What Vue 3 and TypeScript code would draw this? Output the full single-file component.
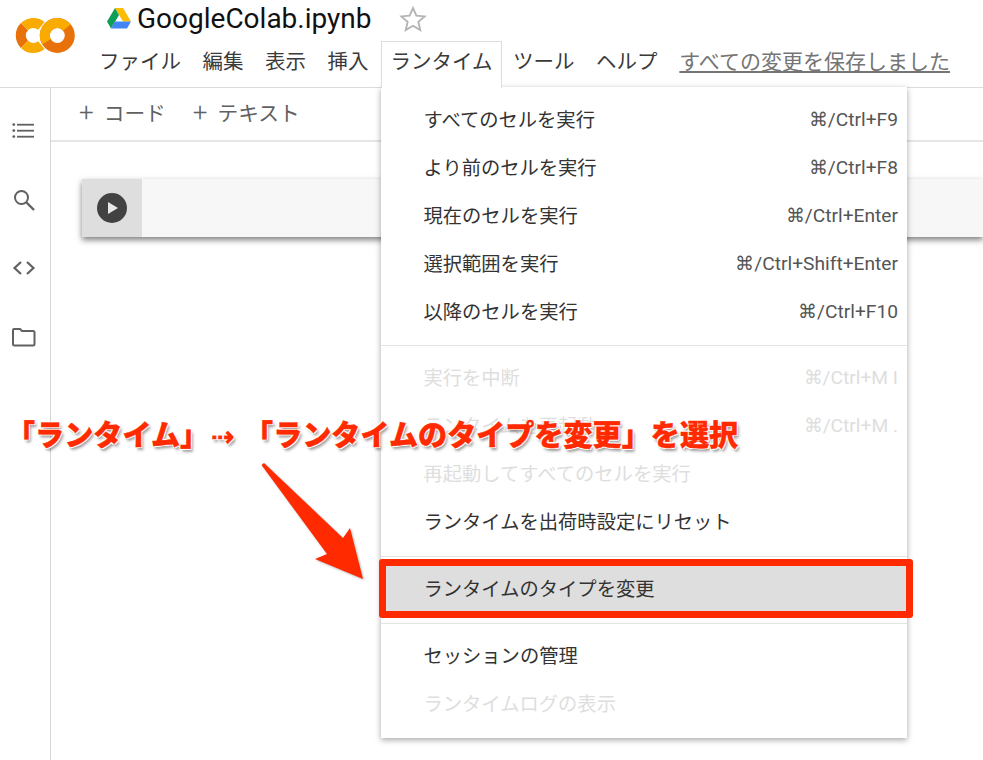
<script setup lang="ts">
interface MenuItem { label: string; shortcut?: string; disabled?: boolean }
const navItems: string[] = ['ファイル', '編集', '表示', '挿入']
const groupA: MenuItem[] = [
  { label: 'すべてのセルを実行', shortcut: '⌘/Ctrl+F9' },
  { label: 'より前のセルを実行', shortcut: '⌘/Ctrl+F8' },
  { label: '現在のセルを実行', shortcut: '⌘/Ctrl+Enter' },
  { label: '選択範囲を実行', shortcut: '⌘/Ctrl+Shift+Enter' },
  { label: '以降のセルを実行', shortcut: '⌘/Ctrl+F10' },
]
const groupB: MenuItem[] = [
  { label: '実行を中断', shortcut: '⌘/Ctrl+M I', disabled: true },
  { label: 'ランタイムを再起動', shortcut: '⌘/Ctrl+M .', disabled: true },
  { label: '再起動してすべてのセルを実行', disabled: true },
  { label: 'ランタイムを出荷時設定にリセット' },
]
const groupC: MenuItem[] = [
  { label: 'セッションの管理' },
  { label: 'ランタイムログの表示', disabled: true },
]
</script>

<template>
  <div class="page">
    <header class="header">
      <svg class="logo" width="60" height="36" viewBox="0 0 60 36" fill="none" stroke-width="10">
        <path d="M9.460 8.660 A12.500 12.500 0 0 0 9.460 26.340" stroke="#E8710A" />
        <path d="M9.460 8.660 A12.500 12.500 0 0 1 26.330 7.920" stroke="#F9AB00" />
        <path d="M9.460 26.340 A12.500 12.500 0 0 0 26.330 27.080" stroke="#F9AB00" />
        <circle cx="42.300" cy="17.500" r="12.500" stroke="#E8710A" />
        <path d="M51.880 9.470 A12.500 12.500 0 0 0 31.470 23.750" stroke="#F9AB00" />
      </svg>
      <div class="head-main">
        <div class="title-row">
          <svg class="drive" width="24" height="21" viewBox="0 0 24 21">
            <path d="M8 0h8l8 13.500h-8z" fill="#FBBC04" />
            <path d="M8 0L0 13.500l4 7L12 7z" fill="#0F9D58" />
            <path d="M4 20.500h16l4-7H8z" fill="#4285F4" />
          </svg>
          <span class="title">GoogleColab.ipynb</span>
          <svg class="star" width="30" height="30" viewBox="0 0 24 24">
            <path d="M12 3.200l2.700 6.100 6.600.6-5 4.400 1.500 6.500L12 17.400l-5.800 3.400 1.500-6.500-5-4.400 6.600-.6z" fill="none" stroke="#b4b4b4" stroke-width="1.500" />
          </svg>
        </div>
        <nav class="nav">
          <span v-for="n in navItems" :key="n" class="nav-item">{{ n }}</span>
          <span class="nav-item active">ランタイム</span>
          <span class="nav-item">ツール</span>
          <span class="nav-item">ヘルプ</span>
          <span class="saved">すべての変更を保存しました</span>
        </nav>
      </div>
    </header>

    <div class="body">
      <aside class="side">
        <svg width="24" height="24" viewBox="0 0 24 24" fill="#616161">
          <circle cx="1.800" cy="5.600" r="1.400" /><circle cx="1.800" cy="11.600" r="1.400" /><circle cx="1.800" cy="17.600" r="1.400" />
          <rect x="5" y="4.800" width="17" height="1.800" /><rect x="5" y="10.800" width="17" height="1.800" /><rect x="5" y="16.800" width="17" height="1.800" />
        </svg>
        <svg width="24" height="24" viewBox="0 0 24 24" fill="none" stroke="#616161" stroke-width="2">
          <circle cx="9.500" cy="9.500" r="6.500" /><path d="M14.500 14.500l7.500 7.500" stroke-width="2.400" />
        </svg>
        <svg width="24" height="24" viewBox="0 0 24 24" fill="none" stroke="#616161" stroke-width="2.200">
          <path d="M9 6l-6.500 6L9 18M15 6l6.500 6L15 18" />
        </svg>
        <svg width="24" height="24" viewBox="0 0 24 24" fill="none" stroke="#616161" stroke-width="2">
          <path d="M1 5a1 1 0 0 1 1-1h6l2 2h11a1.500 1.500 0 0 1 1.500 1.500V19a1.500 1.500 0 0 1-1.500 1.500H2.500A1.500 1.500 0 0 1 1 19z" />
        </svg>
      </aside>
      <main class="main">
        <div class="toolbar">
          <span class="tool"><span class="plus">+</span>コード</span>
          <span class="tool"><span class="plus">+</span>テキスト</span>
        </div>
        <div class="cell">
          <div class="gutter">
            <span class="run"><svg width="12" height="14" viewBox="0 0 12 14"><path d="M1 1l10 6-10 6z" fill="#e8e8e8" /></svg></span>
          </div>
          <div class="editor"></div>
        </div>
      </main>
    </div>

    <section class="menu">
      <div class="group first">
        <div v-for="m in groupA" :key="m.label" class="item">
          <span>{{ m.label }}</span><span class="short">{{ m.shortcut }}</span>
        </div>
      </div>
      <div class="group">
        <div v-for="m in groupB" :key="m.label" class="item" :class="{ off: m.disabled }">
          <span>{{ m.label }}</span><span class="short">{{ m.shortcut }}</span>
        </div>
      </div>
      <div class="group">
        <div class="item selected"><span>ランタイムのタイプを変更</span></div>
      </div>
      <div class="group last">
        <div v-for="m in groupC" :key="m.label" class="item" :class="{ off: m.disabled }">
          <span>{{ m.label }}</span>
        </div>
      </div>
    </section>

    <div class="callout">「ランタイム」<span class="dash">⇢</span>「ランタイムのタイプを変更」を選択</div>
    <svg class="arrow" width="110" height="125" viewBox="0 0 110 125">
      <path d="M1.500 4L4 2 83 77 90 67 103 118 55 98 67 93z" fill="#FF2A00" />
    </svg>
    <div class="hl"></div>
  </div>
</template>

<style>
html, body { margin: 0; background: #fff; }
</style>

<style scoped>
.page {
  position: relative;
  width: 983px;
  height: 760px;
  overflow: hidden;
  background: #fff;
  color: #3c3c3c;
  font-family: Roboto, "Noto Sans CJK JP", sans-serif;
}
.header {
  display: flex;
  height: 87px;
  border-bottom: 1px solid #dcdcdc;
  box-sizing: content-box;
}
.logo { margin: 18px 0 0 15px; flex: none; }
.head-main { margin-left: 26px; }
.title-row { display: flex; align-items: center; height: 37px; padding-bottom: 2px; }
.drive { margin-left: 6px; }
.title { margin-left: 6px; font-size: 28px; color: #111; line-height: 37px; white-space: nowrap; }
.star { margin-left: 26px; }
.nav {
  display: flex;
  align-items: flex-start;
  height: 48px;
  margin-left: -2px;
  font-size: 20.500px;
}
.nav-item { padding: 0 10.750px; line-height: 46px; color: #3a3a3a; white-space: nowrap; }
.nav-item:first-child { padding-left: 0; }
.active {
  position: relative;
  z-index: 3;
  background: #fff;
  height: 47px;
  margin: 2px 0 0 1.500px;
  box-sizing: border-box;
  border: 1px solid #dcdcdc;
  border-bottom: none;
  padding: 0 8.750px;
  line-height: 40px;
}
.saved {
  margin-left: 11px;
  font-size: 21px;
  color: #757575;
  text-decoration: underline;
  white-space: nowrap;
  line-height: 46px;
}
.body { display: flex; height: 672px; }
.side {
  width: 48px;
  padding: 31px 2px 0 0;
  flex: none;
  border-right: 1px solid #d6d6d6;
  display: flex;
  flex-direction: column;
  align-items: center;
  gap: 44.600px;
  box-sizing: content-box;
}
.main { flex: 1; min-width: 0; }
.toolbar {
  height: 48px;
  padding: 0 0 4px 28px;
  border-bottom: 2px solid #e6e6e6;
  display: flex;
  align-items: center;
  gap: 27px;
  font-size: 20.700px;
  color: #616161;
  box-sizing: content-box;
}
.tool { display: flex; align-items: center; white-space: nowrap; }
.plus { font-size: 26px; margin-right: 10px; font-weight: 300; }
.cell {
  display: flex;
  height: 58px;
  margin: 37px 0 0 31px;
  box-shadow: 0 3px 6px rgba(0, 0, 0, 0.5);
}
.gutter {
  width: 60px;
  background: #dedede;
  display: flex;
  align-items: center;
  justify-content: center;
}
.run {
  width: 30px;
  height: 30px;
  border-radius: 50%;
  background: #424242;
  display: flex;
  align-items: center;
  justify-content: center;
  padding-left: 2px;
  box-sizing: border-box;
}
.editor { flex: 1; background: #f7f7f7; }
.menu {
  position: absolute;
  z-index: 2;
  left: 381px;
  top: 87px;
  width: 526px;
  height: 651px;
  background: #fff;
  box-shadow: 0 2px 6px rgba(0, 0, 0, 0.35);
  font-family: "Noto Sans CJK JP", Roboto, sans-serif;
  font-size: 19.300px;
  color: #333;
  box-sizing: border-box;
  padding-top: 8px;
}
.group { border-bottom: 1px solid #e4e4e4; padding-bottom: 11px; margin-bottom: 7px; }
.group.first { padding-bottom: 10px; }
.group.last { border-bottom: none; }
.item {
  display: flex;
  justify-content: space-between;
  align-items: center;
  height: 48px;
  padding: 0 9px 0 42.500px;
  white-space: nowrap;
}
.short { font-family: Roboto, sans-serif; font-size: 19.200px; color: #555; }
.off, .off .short { color: #dedede; }
.selected { background: #dedede; }
.callout {
  position: absolute;
  z-index: 4;
  left: 6px;
  top: 411px;
  font-family: "Noto Sans CJK JP", sans-serif;
  font-size: 29.100px;
  font-weight: 900;
  line-height: 44px;
  color: #FF2A00;
  white-space: nowrap;
  -webkit-text-stroke: 0.4px #FF2A00;
  text-shadow: 1px 1px 0 #fff, -1px -1px 0 #fff, 1px -1px 0 #fff, -1px 1px 0 #fff, 2px 3px 3px rgba(0, 0, 0, 0.4);
}
.dash {
  display: inline-block;
  width: 35px;
  padding-left: 2px;
  box-sizing: border-box;
  font-family: "DejaVu Sans", sans-serif;
  font-size: 28px;
}
.arrow {
  position: absolute;
  z-index: 4;
  left: 260px;
  top: 461px;
  filter: drop-shadow(1px 1px 1px rgba(0, 0, 0, 0.3));
}
.hl {
  position: absolute;
  z-index: 4;
  left: 379px;
  top: 559px;
  width: 534px;
  height: 59px;
  box-sizing: border-box;
  border: 7px solid #FF2A00;
  border-radius: 3px;
}
</style>
